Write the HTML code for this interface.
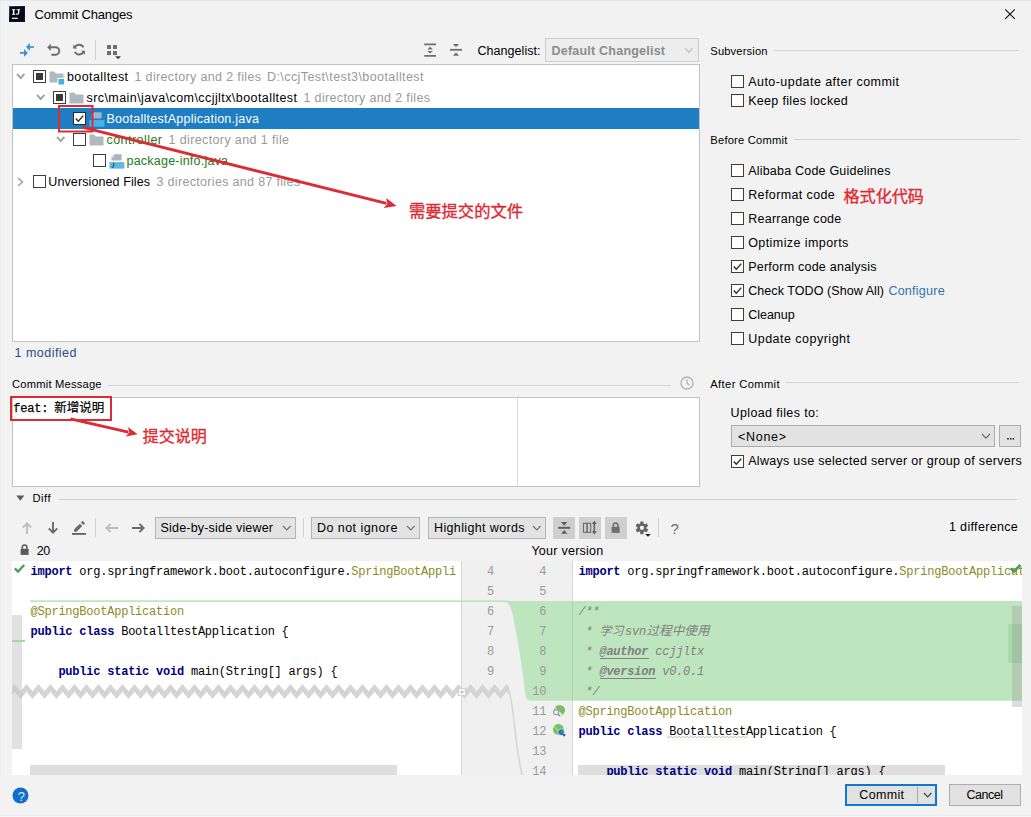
<!DOCTYPE html>
<html><head><meta charset="utf-8"><title>Commit Changes</title>
<style>
html,body{margin:0;padding:0;}
body{width:1031px;height:817px;position:relative;overflow:hidden;background:#f2f2f2;font-family:"Liberation Sans",sans-serif;}
body>div,body>svg,body>span{position:absolute;box-sizing:border-box;}
.t{white-space:pre;line-height:1;display:block;}
.m{font-family:"Liberation Mono",monospace;}
svg{overflow:visible;}
</style></head><body>
<div style="left:0px;top:0px;width:1031px;height:817px;background:#f2f2f2;"></div>
<div style="left:0px;top:0px;width:1031px;height:1px;background:#e6e6e6;"></div>
<div style="left:0px;top:1px;width:1px;height:816px;background:#ececec;"></div>
<svg style="left:9px;top:6px;" width="16" height="16" viewBox="0 0 16 16"><defs><linearGradient id="ijg" x1="0" y1="0" x2="1" y2="1"><stop offset="0" stop-color="#1b5c93"/><stop offset="0.5" stop-color="#0b1330"/><stop offset="1" stop-color="#1a0b3c"/></linearGradient></defs><rect width="16" height="16" fill="url(#ijg)"/><rect x="1" y="1" width="14" height="14" fill="#070711"/><path d="M3 3.2 H6.3 V4.3 H5.35 V7.7 H6.3 V8.8 H3 V7.7 H3.95 V4.3 H3 Z" fill="#fff"/><path d="M7.6 3.2 H11.1 V4.3 H10.3 V7 Q10.3 8.9 8.4 8.8 Q7.4 8.8 6.9 8.2 L7.5 7.3 Q7.9 7.7 8.4 7.7 Q9 7.7 9 6.9 V4.3 H7.6 Z" fill="#fff"/><rect x="3" y="11.7" width="5.8" height="1.2" fill="#fff"/></svg>
<span class="t" id="t1" style="left:34.5px;top:8px;font-size:13px;color:#000;letter-spacing:-0.188px;">Commit Changes</span>
<svg style="left:1004px;top:8px;" width="12" height="12" viewBox="0 0 12 12"><path d="M1.2 1.3 L10.8 10.9 M10.8 1.3 L1.2 10.9" stroke="#111" stroke-width="1.15" fill="none"/></svg>
<svg style="left:0px;top:0px;pointer-events:none;" width="1031" height="817" viewBox="0 0 1031 817"><path d="M33.9 47 H29.5" stroke="#3592d6" stroke-width="1.7" fill="none"/><path d="M26 47 L29.9 43.1 V50.9 Z" fill="#3592d6"/><path d="M19.9 52.9 H24.4" stroke="#3592d6" stroke-width="1.7" fill="none"/><path d="M27.9 52.9 L24 49 V56.8 Z" fill="#3592d6"/><path d="M50 47.3 H55.6 A3.7 3.7 0 0 1 55.6 54.7 H51.4" fill="none" stroke="#6e6e6e" stroke-width="2"/><path d="M47.2 47.3 L50.8 43.7 V50.9 Z" fill="#6e6e6e"/><path d="M74.4 48.2 A4.9 4.9 0 0 1 83.4 47.4 M83.8 51 A4.9 4.9 0 0 1 74.8 51.9" fill="none" stroke="#6e6e6e" stroke-width="1.9"/><path d="M73.2 44.6 V48.6 H77.2 Z M85 54.7 V50.7 H81 Z" fill="#6e6e6e"/></svg>
<div style="left:95px;top:40px;width:1px;height:20px;background:#d1d1d1;"></div>
<svg style="left:107px;top:45px;" width="16" height="16" viewBox="0 0 16 16"><rect x="0" y="0" width="4" height="4" fill="#6e6e6e"/><rect x="6" y="0" width="4" height="4" fill="#6e6e6e"/><rect x="0" y="6" width="4" height="4" fill="#6e6e6e"/><rect x="6" y="6" width="4" height="4" fill="#6e6e6e"/><path d="M8.2 11.3 H14 L11.1 14.2 Z" fill="#3c3c3c"/></svg>
<svg style="left:0px;top:0px;pointer-events:none;" width="1031" height="817" viewBox="0 0 1031 817"><path d="M424.2 44.3 H436 M424.2 55.9 H436" stroke="#6e6e6e" stroke-width="1.8"/><path d="M430.1 46.7 L432.9 49.4 H427.3 Z M430.1 53.6 L432.9 50.9 H427.3 Z" fill="#6e6e6e"/><path d="M450 49.8 H462" stroke="#6e6e6e" stroke-width="1.8"/><path d="M456 47 L459.1 44 H452.9 Z M456 52.6 L459.1 55.7 H452.9 Z" fill="#6e6e6e"/></svg>
<span class="t" id="t2" style="left:477.5px;top:45px;font-size:12.5px;color:#000;letter-spacing:0.045px;">Changelist:</span>
<div style="left:545px;top:38px;width:154px;height:24px;background:#ededed;border:1px solid #cdcdcd;"></div>
<span class="t" id="t3" style="left:551.5px;top:45px;font-size:12.5px;color:#8c8c8c;font-weight:bold;letter-spacing:0.221px;">Default Changelist</span>
<svg style="left:684.2px;top:46.699999999999996px;" width="9.6" height="6.2" viewBox="0 0 9.6 6.2"><path d="M1 1 L4.8 5.2 L8.6 1" fill="none" stroke="#b4b4b4" stroke-width="1.1"/></svg>
<div style="left:12px;top:64px;width:688px;height:278px;background:#fff;border:1px solid #c3c3c3;"></div>
<div style="left:13px;top:108px;width:686px;height:21px;background:#1e7dc3;"></div>
<svg style="left:15.8px;top:72.9px;" width="9.4" height="6.2" viewBox="0 0 9.4 6.2"><path d="M1 1 L4.7 5.2 L8.4 1" fill="none" stroke="#a0a0a0" stroke-width="1.9"/></svg>
<svg style="left:33px;top:70px;" width="13" height="13" viewBox="0 0 13 13"><rect x="0.5" y="0.5" width="12" height="12" fill="#fff" stroke="#3e3e3e" stroke-width="1"/><rect x="3" y="3" width="7" height="7" fill="#3a3a3a"/></svg>
<svg style="left:49px;top:69.5px;" width="16" height="16" viewBox="0 0 16 16"><path d="M0.5 1.5 H5.2 L6.8 3.6 H14.5 V12.5 H0.5 Z" fill="#aeb9c0"/><rect x="8" y="8" width="7.5" height="7.5" fill="#f2f2f2" opacity="0"/><rect x="9" y="8.5" width="6.5" height="6.5" fill="#40b0dd" stroke="#fff" stroke-width="1"/></svg>
<span class="t" id="t4" style="left:67px;top:71px;font-size:12.5px;color:#000;letter-spacing:0.402px;">bootalltest</span>
<span class="t" id="t5" style="left:134.5px;top:71px;font-size:12.5px;color:#999999;letter-spacing:0.349px;">1 directory and 2 files</span>
<span class="t" id="t6" style="left:267px;top:71px;font-size:12.5px;color:#999999;letter-spacing:0.418px;">D:\ccjTest\test3\bootalltest</span>
<svg style="left:36.0px;top:93.9px;" width="9.4" height="6.2" viewBox="0 0 9.4 6.2"><path d="M1 1 L4.7 5.2 L8.4 1" fill="none" stroke="#a0a0a0" stroke-width="1.9"/></svg>
<svg style="left:53px;top:91px;" width="13" height="13" viewBox="0 0 13 13"><rect x="0.5" y="0.5" width="12" height="12" fill="#fff" stroke="#3e3e3e" stroke-width="1"/><rect x="3" y="3" width="7" height="7" fill="#3a3a3a"/></svg>
<svg style="left:69px;top:90.5px;" width="16" height="16" viewBox="0 0 16 16"><path d="M0.5 1.5 H5.2 L6.8 3.6 H14.5 V12.5 H0.5 Z" fill="#aeb9c0"/></svg>
<span class="t" id="t7" style="left:86.5px;top:92px;font-size:12.5px;color:#000;letter-spacing:0.425px;">src\main\java\com\ccjjltx\bootalltest</span>
<span class="t" id="t8" style="left:303.5px;top:92px;font-size:12.5px;color:#999999;letter-spacing:0.349px;">1 directory and 2 files</span>
<svg style="left:73px;top:112px;" width="13" height="13" viewBox="0 0 13 13"><rect x="0.5" y="0.5" width="12" height="12" fill="#fff" stroke="#2b2b2b" stroke-width="1"/><path d="M2.8 6.6 L5.3 9.2 L10.3 3.6" fill="none" stroke="#2b2b2b" stroke-width="1.4"/></svg>
<svg style="left:88.5px;top:111px;" width="16" height="16" viewBox="0 0 16 16"><path d="M5.4 1.3 H12.6 V7.5 H2.5 V4.4 Z" fill="#9cb4cc"/><path d="M2.5 4.6 L5.4 1.7 V4.6 Z" fill="#c3d3e2"/><rect x="0.5" y="9.1" width="14.9" height="6.5" fill="#4fb0e6"/></svg>
<span class="t" id="t9" style="left:106.5px;top:113px;font-size:12.5px;color:#fff;letter-spacing:0.252px;">BootalltestApplication.java</span>
<svg style="left:55.8px;top:135.9px;" width="9.4" height="6.2" viewBox="0 0 9.4 6.2"><path d="M1 1 L4.7 5.2 L8.4 1" fill="none" stroke="#a0a0a0" stroke-width="1.9"/></svg>
<svg style="left:73px;top:133px;" width="13" height="13" viewBox="0 0 13 13"><rect x="0.5" y="0.5" width="12" height="12" fill="#fff" stroke="#3e3e3e" stroke-width="1"/></svg>
<svg style="left:89px;top:132.5px;" width="16" height="16" viewBox="0 0 16 16"><path d="M0.5 1.5 H5.2 L6.8 3.6 H14.5 V12.5 H0.5 Z" fill="#aeb9c0"/></svg>
<span class="t" id="t10" style="left:106.5px;top:134px;font-size:12.5px;color:#237a23;letter-spacing:0.453px;">controller</span>
<span class="t" id="t11" style="left:168.5px;top:134px;font-size:12.5px;color:#999999;letter-spacing:0.378px;">1 directory and 1 file</span>
<svg style="left:93px;top:154px;" width="13" height="13" viewBox="0 0 13 13"><rect x="0.5" y="0.5" width="12" height="12" fill="#fff" stroke="#3e3e3e" stroke-width="1"/></svg>
<svg style="left:108.5px;top:153px;" width="16" height="16" viewBox="0 0 16 16"><path d="M5.4 1.3 H12.6 V7.5 H2.5 V4.4 Z" fill="#aab4bc"/><path d="M2.5 4.6 L5.4 1.7 V4.6 Z" fill="#d3d9dd"/><rect x="0.5" y="9.1" width="14.9" height="6.5" fill="#62b5e6"/><path d="M4.7 10 V13.2 Q4.7 14.4 3.5 14.3 L2.6 14" fill="none" stroke="#23405f" stroke-width="1"/></svg>
<span class="t" id="t12" style="left:126.5px;top:155px;font-size:12.5px;color:#237a23;letter-spacing:0.220px;">package-info.java</span>
<svg style="left:16.75px;top:176.5px;" width="6.5" height="10" viewBox="0 0 6.5 10"><path d="M1 1 L5.5 5.0 L1 9" fill="none" stroke="#9b9b9b" stroke-width="1.4"/></svg>
<svg style="left:33px;top:175px;" width="13" height="13" viewBox="0 0 13 13"><rect x="0.5" y="0.5" width="12" height="12" fill="#fff" stroke="#3e3e3e" stroke-width="1"/></svg>
<span class="t" id="t13" style="left:48.3px;top:176px;font-size:12.5px;color:#000;letter-spacing:0.103px;">Unversioned Files</span>
<span class="t" id="t14" style="left:156.5px;top:176px;font-size:12.5px;color:#999999;letter-spacing:0.320px;">3 directories and 87 files</span>
<span class="t" id="t15" style="left:14.5px;top:347px;font-size:12.5px;color:#2a4a8c;letter-spacing:0.479px;">1 modified</span>
<span class="t" id="t16" style="left:710.3px;top:46px;font-size:11.2px;color:#000;letter-spacing:0.135px;">Subversion</span>
<div style="left:774px;top:49.8px;width:245px;height:1px;background:#d4d4d4;"></div>
<span class="t" id="t17" style="left:710.3px;top:135px;font-size:11.2px;color:#000;letter-spacing:0.199px;">Before Commit</span>
<div style="left:794px;top:138.8px;width:225px;height:1px;background:#d4d4d4;"></div>
<span class="t" id="t18" style="left:710.3px;top:379px;font-size:11.2px;color:#000;letter-spacing:0.365px;">After Commit</span>
<div style="left:786px;top:382.3px;width:233px;height:1px;background:#d4d4d4;"></div>
<svg style="left:731px;top:75px;" width="13" height="13" viewBox="0 0 13 13"><rect x="0.5" y="0.5" width="12" height="12" fill="#fff" stroke="#3e3e3e" stroke-width="1"/></svg>
<span class="t" id="t19" style="left:748.2px;top:76px;font-size:12.5px;color:#000;letter-spacing:0.454px;">Auto-update after commit</span>
<svg style="left:731px;top:94px;" width="13" height="13" viewBox="0 0 13 13"><rect x="0.5" y="0.5" width="12" height="12" fill="#fff" stroke="#3e3e3e" stroke-width="1"/></svg>
<span class="t" id="t20" style="left:748.2px;top:95px;font-size:12.5px;color:#000;letter-spacing:0.312px;">Keep files locked</span>
<svg style="left:731px;top:164px;" width="13" height="13" viewBox="0 0 13 13"><rect x="0.5" y="0.5" width="12" height="12" fill="#fff" stroke="#3e3e3e" stroke-width="1"/></svg>
<span class="t" id="t21" style="left:748.2px;top:165px;font-size:12.5px;color:#000;letter-spacing:0.209px;">Alibaba Code Guidelines</span>
<svg style="left:731px;top:188px;" width="13" height="13" viewBox="0 0 13 13"><rect x="0.5" y="0.5" width="12" height="12" fill="#fff" stroke="#3e3e3e" stroke-width="1"/></svg>
<span class="t" id="t22" style="left:748.2px;top:189px;font-size:12.5px;color:#000;letter-spacing:0.385px;">Reformat code</span>
<svg style="left:731px;top:212px;" width="13" height="13" viewBox="0 0 13 13"><rect x="0.5" y="0.5" width="12" height="12" fill="#fff" stroke="#3e3e3e" stroke-width="1"/></svg>
<span class="t" id="t23" style="left:748.2px;top:213px;font-size:12.5px;color:#000;letter-spacing:0.265px;">Rearrange code</span>
<svg style="left:731px;top:236px;" width="13" height="13" viewBox="0 0 13 13"><rect x="0.5" y="0.5" width="12" height="12" fill="#fff" stroke="#3e3e3e" stroke-width="1"/></svg>
<span class="t" id="t24" style="left:748.2px;top:237px;font-size:12.5px;color:#000;letter-spacing:0.421px;">Optimize imports</span>
<svg style="left:731px;top:260px;" width="13" height="13" viewBox="0 0 13 13"><rect x="0.5" y="0.5" width="12" height="12" fill="#fff" stroke="#3e3e3e" stroke-width="1"/><path d="M2.8 6.6 L5.3 9.2 L10.3 3.6" fill="none" stroke="#2b2b2b" stroke-width="1.4"/></svg>
<span class="t" id="t25" style="left:748.2px;top:261px;font-size:12.5px;color:#000;letter-spacing:0.236px;">Perform code analysis</span>
<svg style="left:731px;top:284px;" width="13" height="13" viewBox="0 0 13 13"><rect x="0.5" y="0.5" width="12" height="12" fill="#fff" stroke="#3e3e3e" stroke-width="1"/><path d="M2.8 6.6 L5.3 9.2 L10.3 3.6" fill="none" stroke="#2b2b2b" stroke-width="1.4"/></svg>
<span class="t" id="t26" style="left:748.2px;top:285px;font-size:12.5px;color:#000;letter-spacing:0.074px;">Check TODO (Show All)</span>
<span class="t" id="t27" style="left:888.4px;top:285px;font-size:12.5px;color:#2f73a8;letter-spacing:0.250px;">Configure</span>
<svg style="left:731px;top:308px;" width="13" height="13" viewBox="0 0 13 13"><rect x="0.5" y="0.5" width="12" height="12" fill="#fff" stroke="#3e3e3e" stroke-width="1"/></svg>
<span class="t" id="t28" style="left:748.2px;top:309px;font-size:12.5px;color:#000;letter-spacing:-0.013px;">Cleanup</span>
<svg style="left:731px;top:332px;" width="13" height="13" viewBox="0 0 13 13"><rect x="0.5" y="0.5" width="12" height="12" fill="#fff" stroke="#3e3e3e" stroke-width="1"/></svg>
<span class="t" id="t29" style="left:748.2px;top:333px;font-size:12.5px;color:#000;letter-spacing:0.486px;">Update copyright</span>
<span class="t" id="t30" style="left:730.5px;top:407px;font-size:12.5px;color:#000;letter-spacing:0.374px;">Upload files to:</span>
<div style="left:731px;top:425px;width:264px;height:22px;background:#e2e2e2;border:1px solid #adadad;"></div>
<span class="t" id="t31" style="left:738px;top:431px;font-size:12.5px;color:#000;letter-spacing:0.703px;">&lt;None&gt;</span>
<svg style="left:980.5px;top:433.25px;" width="10" height="6.1" viewBox="0 0 10 6.1"><path d="M1 1 L5.0 5.1 L9 1" fill="none" stroke="#666" stroke-width="1.1"/></svg>
<div style="left:999px;top:425px;width:22px;height:22px;background:#e2e2e2;border:1px solid #adadad;"></div>
<svg style="left:1006px;top:437px;" width="9" height="3" viewBox="0 0 9 3"><rect x="1.2" y="1" width="1.5" height="1.6" fill="#222"/><rect x="3.9" y="1" width="1.5" height="1.6" fill="#222"/><rect x="6.6" y="1" width="1.5" height="1.6" fill="#222"/></svg>
<svg style="left:731px;top:455px;" width="13" height="13" viewBox="0 0 13 13"><rect x="0.5" y="0.5" width="12" height="12" fill="#fff" stroke="#3e3e3e" stroke-width="1"/><path d="M2.8 6.6 L5.3 9.2 L10.3 3.6" fill="none" stroke="#2b2b2b" stroke-width="1.4"/></svg>
<span class="t" id="t32" style="left:748.2px;top:455px;font-size:12.5px;color:#000;letter-spacing:0.303px;">Always use selected server or group of servers</span>
<span class="t" id="t33" style="left:12.1px;top:379px;font-size:11.2px;color:#000;letter-spacing:0.189px;">Commit Message</span>
<div style="left:108px;top:385px;width:563px;height:1px;background:#d4d4d4;"></div>
<svg style="left:680px;top:376px;" width="14" height="14" viewBox="0 0 14 14"><circle cx="7" cy="7" r="6" fill="none" stroke="#b3b3b3" stroke-width="1.3"/><path d="M7 3.4 V7.3 L9.4 9" fill="none" stroke="#b3b3b3" stroke-width="1.3"/></svg>
<div style="left:12px;top:397px;width:688px;height:90px;background:#fff;border:1px solid #c3c3c3;"></div>
<div style="left:517px;top:398px;width:1px;height:88px;background:#dcdcdc;"></div>
<span class="t m" id="t34" style="left:13.2px;top:403px;font-size:12px;color:#000;letter-spacing:-0.2px;-webkit-text-stroke:0.25px #000;">feat:</span>
<svg style="left:16px;top:495px;" width="9" height="7" viewBox="0 0 9 7"><path d="M0.3 0.6 H8.3 L4.3 5.8 Z" fill="#5a5a5a"/></svg>
<span class="t" id="t35" style="left:32.5px;top:493px;font-size:11.2px;color:#000;letter-spacing:0.469px;">Diff</span>
<div style="left:59px;top:499px;width:958px;height:1px;background:#d0d0d0;"></div>
<svg style="left:21px;top:522px;" width="12" height="12" viewBox="0 0 12 12"><path d="M6 12 V1.5 M1.8 5.6 L6 1.4 L10.2 5.6" fill="none" stroke="#bdbdbd" stroke-width="1.9"/></svg>
<svg style="left:47px;top:522px;" width="12" height="12" viewBox="0 0 12 12"><path d="M6 0 V10.5 M1.8 6.4 L6 10.6 L10.2 6.4" fill="none" stroke="#6a6a6a" stroke-width="1.9"/></svg>
<svg style="left:0px;top:0px;pointer-events:none;" width="1031" height="817" viewBox="0 0 1031 817"><path d="M74.1 531.8 V529.3 L80 523.8 L82.3 526 L76.6 531.8 Z" fill="#6a6a6a"/><path d="M80.9 522.5 L82.5 520.8 L85.1 523.2 L83.5 524.9 Z" fill="#6a6a6a"/><rect x="72" y="533" width="14" height="1.9" fill="#666"/></svg>
<div style="left:95px;top:518px;width:1px;height:19px;background:#d1d1d1;"></div>
<svg style="left:105.2px;top:523px;" width="13" height="10" viewBox="0 0 13 10"><path d="M13 5 H1.5 M5.6 0.8 L1.4 5 L5.6 9.2" fill="none" stroke="#bdbdbd" stroke-width="1.9"/></svg>
<svg style="left:132.2px;top:523px;" width="13" height="10" viewBox="0 0 13 10"><path d="M0 5 H11.5 M7.4 0.8 L11.6 5 L7.4 9.2" fill="none" stroke="#6a6a6a" stroke-width="1.9"/></svg>
<div style="left:155px;top:517px;width:141px;height:22px;background:#e3e3e3;border:1px solid #b4b4b4;"></div>
<span class="t" id="t36" style="left:160.6px;top:522px;font-size:12.5px;color:#000;letter-spacing:0.185px;">Side-by-side viewer</span>
<svg style="left:282.0px;top:525.3px;" width="9.6" height="6" viewBox="0 0 9.6 6"><path d="M1 1 L4.8 5 L8.6 1" fill="none" stroke="#707070" stroke-width="1.1"/></svg>
<div style="left:303px;top:518px;width:1px;height:19px;background:#d1d1d1;"></div>
<div style="left:311px;top:517px;width:109px;height:22px;background:#e3e3e3;border:1px solid #b4b4b4;"></div>
<span class="t" id="t37" style="left:317px;top:522px;font-size:12.5px;color:#000;letter-spacing:0.445px;">Do not ignore</span>
<svg style="left:405.7px;top:525.3px;" width="9.6" height="6" viewBox="0 0 9.6 6"><path d="M1 1 L4.8 5 L8.6 1" fill="none" stroke="#707070" stroke-width="1.1"/></svg>
<div style="left:428px;top:517px;width:118px;height:22px;background:#e3e3e3;border:1px solid #b4b4b4;"></div>
<span class="t" id="t38" style="left:434px;top:522px;font-size:12.5px;color:#000;letter-spacing:0.367px;">Highlight words</span>
<svg style="left:532.2px;top:525.3px;" width="9.6" height="6" viewBox="0 0 9.6 6"><path d="M1 1 L4.8 5 L8.6 1" fill="none" stroke="#707070" stroke-width="1.1"/></svg>
<div style="left:553px;top:517px;width:22px;height:22px;background:#cfcfcf;"></div>
<div style="left:579px;top:517px;width:22px;height:22px;background:#cfcfcf;"></div>
<div style="left:605px;top:517px;width:22px;height:22px;background:#cfcfcf;"></div>
<svg style="left:0px;top:0px;pointer-events:none;" width="1031" height="817" viewBox="0 0 1031 817"><path d="M558.2 527.8 H570.2" stroke="#5f5f5f" stroke-width="2"/><path d="M564.2 525.7 L567.4 521.9 H561 Z M564.2 529.9 L567.4 533.7 H561 Z" fill="#5f5f5f"/><rect x="583.5" y="523.3" width="3.6" height="9" fill="none" stroke="#6a6a6a" stroke-width="1.05"/><rect x="587.1" y="523.3" width="3.6" height="9" fill="none" stroke="#6a6a6a" stroke-width="1.05"/><path d="M594.3 522.5 V533" stroke="#5f5f5f" stroke-width="1.5"/><path d="M594.3 520.7 L596.8 524.1 H591.8 Z M594.3 534.6 L596.8 531.2 H591.8 Z" fill="#5f5f5f"/></svg>
<svg style="left:611px;top:521.5px;" width="10" height="12" viewBox="0 0 10 12"><rect x="0.6" y="4.8" width="8" height="6.1" fill="#6e6e6e"/><path d="M2.3 5.2 V3.4 A2.3 2.3 0 0 1 6.9 3.4 V5.2" fill="none" stroke="#6e6e6e" stroke-width="1.5"/></svg>
<svg style="left:0px;top:0px;pointer-events:none;" width="1031" height="817" viewBox="0 0 1031 817"><path d="M641.90 521.40 L641.90 534.20 M636.36 524.60 L647.44 531.00 M647.44 524.60 L636.36 531.00 " stroke="#666" stroke-width="3.3" fill="none"/><circle cx="641.9" cy="527.8" r="4.6" fill="#666"/><circle cx="641.9" cy="527.8" r="2.1" fill="#f4f4f4"/><path d="M645.2 534 H650.8 L648 536.8 Z" fill="#1e1e1e"/></svg>
<div style="left:658px;top:518px;width:1px;height:19px;background:#d1d1d1;"></div>
<span class="t" id="t39" style="left:670.5px;top:521px;font-size:15px;color:#6a6a6a;">?</span>
<span class="t" id="t40" style="left:949px;top:521px;font-size:12.5px;color:#000;letter-spacing:0.336px;">1 difference</span>
<svg style="left:19.5px;top:543.5px;" width="10" height="12" viewBox="0 0 10 12"><rect x="0.6" y="4.8" width="8" height="6.1" fill="#5a5a5a"/><path d="M2.3 5.2 V3.4 A2.3 2.3 0 0 1 6.9 3.4 V5.2" fill="none" stroke="#5a5a5a" stroke-width="1.5"/></svg>
<span class="t" id="t41" style="left:36.7px;top:545px;font-size:12.5px;color:#000;letter-spacing:-0.406px;">20</span>
<span class="t" id="t42" style="left:531.4px;top:545px;font-size:12.5px;color:#000;letter-spacing:0.261px;">Your version</span>
<div style="left:12px;top:561px;width:1010px;height:214px;background:#fff;"></div>
<div style="left:461px;top:561px;width:112px;height:214px;background:#f0f0f0;"></div>
<div style="left:461px;top:561px;width:1px;height:214px;background:#d6d6d6;"></div>
<div style="left:572px;top:561px;width:1px;height:214px;background:#d6d6d6;"></div>
<svg style="left:0px;top:0px;pointer-events:none;" width="1031" height="817" viewBox="0 0 1031 817"><path d="M30 600.3 H507 L508 600.9 H1022 V700.8 H531 Q526.4 700.8 525.6 696 C524 682 520.5 655 516 632 C513 615 511 603.5 506 601.9 H30 Z" fill="#bee6be"/><path d="M508 688 C514 700 514 740 522 775" fill="none" stroke="#d6d6d6" stroke-width="1.6"/></svg>
<div style="left:572px;top:601px;width:1px;height:100px;background:#aed3ae;"></div>
<svg style="left:0px;top:0px;pointer-events:none;" width="1031" height="817" viewBox="0 0 1031 817"><clipPath id="zc"><rect x="12" y="680" width="497" height="24"/></clipPath><path clip-path="url(#zc)" d="M8.5 691.2 L14.5 684.0 L20.5 691.2 L26.5 684.0 L32.5 691.2 L38.5 684.0 L44.5 691.2 L50.5 684.0 L56.5 691.2 L62.5 684.0 L68.5 691.2 L74.5 684.0 L80.5 691.2 L86.5 684.0 L92.5 691.2 L98.5 684.0 L104.5 691.2 L110.5 684.0 L116.5 691.2 L122.5 684.0 L128.5 691.2 L134.5 684.0 L140.5 691.2 L146.5 684.0 L152.5 691.2 L158.5 684.0 L164.5 691.2 L170.5 684.0 L176.5 691.2 L182.5 684.0 L188.5 691.2 L194.5 684.0 L200.5 691.2 L206.5 684.0 L212.5 691.2 L218.5 684.0 L224.5 691.2 L230.5 684.0 L236.5 691.2 L242.5 684.0 L248.5 691.2 L254.5 684.0 L260.5 691.2 L266.5 684.0 L272.5 691.2 L278.5 684.0 L284.5 691.2 L290.5 684.0 L296.5 691.2 L302.5 684.0 L308.5 691.2 L314.5 684.0 L320.5 691.2 L326.5 684.0 L332.5 691.2 L338.5 684.0 L344.5 691.2 L350.5 684.0 L356.5 691.2 L362.5 684.0 L368.5 691.2 L374.5 684.0 L380.5 691.2 L386.5 684.0 L392.5 691.2 L398.5 684.0 L404.5 691.2 L410.5 684.0 L416.5 691.2 L422.5 684.0 L428.5 691.2 L434.5 684.0 L440.5 691.2 L446.5 684.0 L452.5 691.2 L458.5 684.0 L464.5 691.2 L470.5 684.0 L476.5 691.2 L482.5 684.0 L488.5 691.2 L494.5 684.0 L500.5 691.2 L506.5 684.0 L512.5 691.2 L518.5 684.0 L520.5 691.2 L520.5 699.0 L518.5 691.8 L512.5 699.0 L506.5 691.8 L500.5 699.0 L494.5 691.8 L488.5 699.0 L482.5 691.8 L476.5 699.0 L470.5 691.8 L464.5 699.0 L458.5 691.8 L452.5 699.0 L446.5 691.8 L440.5 699.0 L434.5 691.8 L428.5 699.0 L422.5 691.8 L416.5 699.0 L410.5 691.8 L404.5 699.0 L398.5 691.8 L392.5 699.0 L386.5 691.8 L380.5 699.0 L374.5 691.8 L368.5 699.0 L362.5 691.8 L356.5 699.0 L350.5 691.8 L344.5 699.0 L338.5 691.8 L332.5 699.0 L326.5 691.8 L320.5 699.0 L314.5 691.8 L308.5 699.0 L302.5 691.8 L296.5 699.0 L290.5 691.8 L284.5 699.0 L278.5 691.8 L272.5 699.0 L266.5 691.8 L260.5 699.0 L254.5 691.8 L248.5 699.0 L242.5 691.8 L236.5 699.0 L230.5 691.8 L224.5 699.0 L218.5 691.8 L212.5 699.0 L206.5 691.8 L200.5 699.0 L194.5 691.8 L188.5 699.0 L182.5 691.8 L176.5 699.0 L170.5 691.8 L164.5 699.0 L158.5 691.8 L152.5 699.0 L146.5 691.8 L140.5 699.0 L134.5 691.8 L128.5 699.0 L122.5 691.8 L116.5 699.0 L110.5 691.8 L104.5 699.0 L98.5 691.8 L92.5 699.0 L86.5 691.8 L80.5 699.0 L74.5 691.8 L68.5 699.0 L62.5 691.8 L56.5 699.0 L50.5 691.8 L44.5 699.0 L38.5 691.8 L32.5 699.0 L26.5 691.8 L20.5 699.0 L14.5 691.8 L8.5 699.0 Z" fill="#d4d4d4"/></svg>
<div style="left:12px;top:615px;width:10px;height:134px;background:#c8c8c8;opacity:0.55;"></div>
<div style="left:12px;top:640px;width:13px;height:2px;background:#a5d6a7;"></div>
<div style="left:30px;top:765px;width:367px;height:10px;background:#dedede;"></div>
<div style="left:578px;top:765px;width:367px;height:10px;background:#dedede;"></div>
<div style="left:1008px;top:624px;width:14px;height:39px;background:#8fd08f;opacity:0.5;"></div>
<div style="left:1012px;top:606px;width:10px;height:101px;background:#9a9a9a;opacity:0.35;"></div>
<svg style="left:458px;top:688px;" width="8" height="8" viewBox="0 0 8 8"><rect x="0.5" y="0.5" width="7" height="7" fill="#fff" stroke="#cfcfcf"/><path d="M1.8 4 H6.2 M4 1.8 V6.2" stroke="#b8b8b8" stroke-width="0.9"/></svg>
<svg style="left:13.5px;top:563.5px;" width="11" height="9" viewBox="0 0 11 9"><path d="M0.8 4.4 L4 7.6 L10.2 1" fill="none" stroke="#4a9e58" stroke-width="2.3"/></svg>
<svg style="left:1009.5px;top:563.5px;" width="11" height="9" viewBox="0 0 11 9"><path d="M0.8 4.4 L4 7.6 L10.2 1" fill="none" stroke="#4a9e58" stroke-width="2.3"/></svg>
<span class="t m" id="t43" style="left:30.5px;top:566px;font-size:12px;color:#000080;font-weight:bold;letter-spacing:-0.2262000000000004px;">import</span>
<span class="t m" id="t44" style="left:72.35px;top:566px;font-size:12px;color:#000;letter-spacing:-0.2262000000000004px;"> org.springframework.boot.autoconfigure.</span>
<span class="t m" id="t45" style="left:351.35px;top:566px;font-size:12px;color:#8c8c26;letter-spacing:-0.2262000000000004px;">SpringBootAppli</span>
<span class="t m" id="t46" style="left:30.5px;top:606px;font-size:12px;color:#8c8c26;letter-spacing:-0.2262000000000004px;">@SpringBootApplication</span>
<span class="t m" id="t47" style="left:30.5px;top:626px;font-size:12px;color:#000080;font-weight:bold;letter-spacing:-0.2262000000000004px;">public class</span>
<span class="t m" id="t48" style="left:114.19999999999999px;top:626px;font-size:12px;color:#000;letter-spacing:-0.2262000000000004px;"> BootalltestApplication {</span>
<span class="t m" id="t49" style="left:30.5px;top:666px;font-size:12px;color:#000;letter-spacing:-0.2262000000000004px;">    </span>
<span class="t m" id="t50" style="left:58.4px;top:666px;font-size:12px;color:#000080;font-weight:bold;letter-spacing:-0.2262000000000004px;">public static void</span>
<span class="t m" id="t51" style="left:183.95px;top:666px;font-size:12px;color:#000;letter-spacing:-0.2262000000000004px;"> main(String[] args) {</span>
<span class="t m" id="t52" style="left:487.025px;top:566px;font-size:12px;color:#999;letter-spacing:-0.2262000000000004px;">4</span>
<span class="t m" id="t53" style="left:487.025px;top:586px;font-size:12px;color:#999;letter-spacing:-0.2262000000000004px;">5</span>
<span class="t m" id="t54" style="left:487.025px;top:606px;font-size:12px;color:#999;letter-spacing:-0.2262000000000004px;">6</span>
<span class="t m" id="t55" style="left:487.025px;top:626px;font-size:12px;color:#999;letter-spacing:-0.2262000000000004px;">7</span>
<span class="t m" id="t56" style="left:487.025px;top:646px;font-size:12px;color:#999;letter-spacing:-0.2262000000000004px;">8</span>
<span class="t m" id="t57" style="left:487.025px;top:666px;font-size:12px;color:#999;letter-spacing:-0.2262000000000004px;">9</span>
<span class="t m" id="t58" style="left:539.3249999999999px;top:566px;font-size:12px;color:#999;letter-spacing:-0.2262000000000004px;">4</span>
<span class="t m" id="t59" style="left:539.3249999999999px;top:586px;font-size:12px;color:#999;letter-spacing:-0.2262000000000004px;">5</span>
<span class="t m" id="t60" style="left:539.3249999999999px;top:606px;font-size:12px;color:#999;letter-spacing:-0.2262000000000004px;">6</span>
<span class="t m" id="t61" style="left:539.3249999999999px;top:626px;font-size:12px;color:#999;letter-spacing:-0.2262000000000004px;">7</span>
<span class="t m" id="t62" style="left:539.3249999999999px;top:646px;font-size:12px;color:#999;letter-spacing:-0.2262000000000004px;">8</span>
<span class="t m" id="t63" style="left:539.3249999999999px;top:666px;font-size:12px;color:#999;letter-spacing:-0.2262000000000004px;">9</span>
<span class="t m" id="t64" style="left:532.3499999999999px;top:686px;font-size:12px;color:#999;letter-spacing:-0.2262000000000004px;">10</span>
<span class="t m" id="t65" style="left:532.3499999999999px;top:706px;font-size:12px;color:#999;letter-spacing:-0.2262000000000004px;">11</span>
<span class="t m" id="t66" style="left:532.3499999999999px;top:726px;font-size:12px;color:#999;letter-spacing:-0.2262000000000004px;">12</span>
<span class="t m" id="t67" style="left:532.3499999999999px;top:746px;font-size:12px;color:#999;letter-spacing:-0.2262000000000004px;">13</span>
<span class="t m" id="t68" style="left:532.3499999999999px;top:766px;font-size:12px;color:#999;letter-spacing:-0.2262000000000004px;">14</span>
<span class="t m" id="t69" style="left:578.5px;top:566px;font-size:12px;color:#000080;font-weight:bold;letter-spacing:-0.2262000000000004px;">import</span>
<span class="t m" id="t70" style="left:620.35px;top:566px;font-size:12px;color:#000;letter-spacing:-0.2262000000000004px;"> org.springframework.boot.autoconfigure.</span>
<span class="t m" id="t71" style="left:899.35px;top:566px;font-size:12px;color:#8c8c26;letter-spacing:-0.2262000000000004px;">SpringBootApplicat</span>
<span class="t m" id="t72" style="left:578.5px;top:606px;font-size:12px;color:#808080;font-style:italic;letter-spacing:-0.2262000000000004px;">/**</span>
<span class="t m" id="t73" style="left:578.5px;top:626px;font-size:12px;color:#808080;font-style:italic;letter-spacing:-0.2262000000000004px;"> * </span>
<span class="t m" id="t74" style="left:578.5px;top:646px;font-size:12px;color:#808080;font-style:italic;letter-spacing:-0.2262000000000004px;"> * </span>
<span class="t m" id="t75" style="left:599.425px;top:646px;font-size:12px;color:#808080;font-weight:bold;font-style:italic;letter-spacing:-0.2262000000000004px;">@author</span>
<span class="t m" id="t76" style="left:648.25px;top:646px;font-size:12px;color:#808080;font-style:italic;letter-spacing:-0.2262000000000004px;"> ccjjltx</span>
<span class="t m" id="t77" style="left:578.5px;top:666px;font-size:12px;color:#808080;font-style:italic;letter-spacing:-0.2262000000000004px;"> * </span>
<span class="t m" id="t78" style="left:599.425px;top:666px;font-size:12px;color:#808080;font-weight:bold;font-style:italic;letter-spacing:-0.2262000000000004px;">@version</span>
<span class="t m" id="t79" style="left:655.2249999999999px;top:666px;font-size:12px;color:#808080;font-style:italic;letter-spacing:-0.2262000000000004px;"> v0.0.1</span>
<span class="t m" id="t80" style="left:578.5px;top:686px;font-size:12px;color:#808080;font-style:italic;letter-spacing:-0.2262000000000004px;"> */</span>
<div style="left:599.5px;top:657.5px;width:49px;height:1px;background:#808080;"></div>
<div style="left:599.5px;top:677.5px;width:56px;height:1px;background:#808080;"></div>
<span class="t m" id="t81" style="left:578.5px;top:706px;font-size:12px;color:#8c8c26;letter-spacing:-0.2262000000000004px;">@SpringBootApplication</span>
<span class="t m" id="t82" style="left:578.5px;top:726px;font-size:12px;color:#000080;font-weight:bold;letter-spacing:-0.2262000000000004px;">public class</span>
<span class="t m" id="t83" style="left:662.2px;top:726px;font-size:12px;color:#000;letter-spacing:-0.2262000000000004px;"> BootalltestApplication {</span>
<span class="t m" id="t84" style="left:578.5px;top:766px;font-size:12px;color:#000;letter-spacing:-0.2262000000000004px;">    </span>
<span class="t m" id="t85" style="left:606.4px;top:766px;font-size:12px;color:#000080;font-weight:bold;letter-spacing:-0.2262000000000004px;">public static void</span>
<span class="t m" id="t86" style="left:731.9499999999999px;top:766px;font-size:12px;color:#000;letter-spacing:-0.2262000000000004px;"> main(String[] args) {</span>
<svg style="left:0px;top:0px;pointer-events:none;" width="1031" height="817" viewBox="0 0 1031 817"><text x="599.5" y="635" font-size="12" font-style="italic" fill="#808080" style="font-family:'Liberation Mono','Noto Sans CJK SC',monospace;">学习</text><text x="646.5" y="635" font-size="12.6" font-style="italic" fill="#808080" style="font-family:'Liberation Mono','Noto Sans CJK SC',monospace;">过程中使用</text></svg>
<span class="t m" id="t87" style="left:625.0px;top:626px;font-size:12px;color:#808080;font-style:italic;letter-spacing:-0.2262000000000004px;">svn</span>
<svg style="left:0px;top:0px;pointer-events:none;" width="1031" height="817" viewBox="0 0 1031 817"><circle cx="559.7" cy="710.3" r="5.4" fill="#7dbd5f"/><path d="M554.6 707.3 L562.6 715" stroke="#d7f0c8" stroke-width="0.9" fill="none"/><path d="M553.6 712.8 L557 709.3 L562 714.4 L558.4 717.2 Z" fill="#f0f0f0"/><circle cx="556.2" cy="712.2" r="2.5" fill="#eef1f6" stroke="#8a92aa" stroke-width="1.1"/><path d="M558 714.1 L560 716.3" stroke="#8a92aa" stroke-width="1.3" fill="none"/><circle cx="558.4" cy="729.4" r="5.4" fill="#7dbd5f"/><path d="M553.6 726 L560 732.4" stroke="#d7f0c8" stroke-width="0.9" fill="none"/><circle cx="561.2" cy="732.1" r="3.6" fill="#a4e3dc"/><circle cx="561.2" cy="732.1" r="2.9" fill="#3f8fd0"/><path d="M562.5 731 A1.7 1.7 0 1 0 562.5 733.3" fill="none" stroke="#1f4f8a" stroke-width="1"/><path d="M562.2 734.2 H566 L564.1 736.8 Z" fill="#3a4046"/></svg>
<svg style="left:0px;top:0px;pointer-events:none;" width="1031" height="817" viewBox="0 0 1031 817"><path d="M667.0 736.4 L669.0 737.7 L671.0 736.4 L673.0 737.7 L675.0 736.4 L677.0 737.7 L679.0 736.4 L681.0 737.7 L683.0 736.4 L685.0 737.7 L687.0 736.4 L689.0 737.7 L691.0 736.4 L693.0 737.7 L695.0 736.4 L697.0 737.7 L699.0 736.4 L701.0 737.7 L703.0 736.4 L705.0 737.7 L707.0 736.4 L709.0 737.7 L711.0 736.4 L713.0 737.7 L715.0 736.4 L717.0 737.7 L719.0 736.4 L721.0 737.7 L723.0 736.4 L725.0 737.7 L727.0 736.4 L729.0 737.7 L731.0 736.4 L733.0 737.7 L735.0 736.4 L737.0 737.7 L739.0 736.4 L741.0 737.7 L743.0 736.4 L745.0 737.7 L747.0 736.4" fill="none" stroke="#a9b99a" stroke-width="0.8"/></svg>
<div style="left:1022px;top:561px;width:9px;height:214px;background:#f2f2f2;"></div>
<svg style="left:1009.5px;top:563.5px;" width="11" height="9" viewBox="0 0 11 9"><path d="M0.8 4.4 L4 7.6 L10.2 1" fill="none" stroke="#4a9e58" stroke-width="2.3"/></svg>
<div style="left:0px;top:775px;width:1031px;height:42px;background:#f2f2f2;"></div>
<svg style="left:12.1px;top:787.1px;" width="17" height="17" viewBox="0 0 17 17"><circle cx="8.5" cy="8.5" r="8" fill="#0f6fc9"/></svg>
<span class="t" id="t88" style="left:17.8px;top:790px;font-size:13px;color:#dcefff;">?</span>
<div style="left:845px;top:784px;width:92px;height:22px;background:#e1e1e1;border:2px solid #0f78d4;"></div>
<div style="left:917px;top:787px;width:1px;height:16px;background:#a8a8a8;"></div>
<span class="t" id="t89" style="left:859.3px;top:789px;font-size:12.5px;color:#000;letter-spacing:0.328px;">Commit</span>
<svg style="left:922.5px;top:792.1px;" width="9.4" height="5.8" viewBox="0 0 9.4 5.8"><path d="M1 1 L4.7 4.8 L8.4 1" fill="none" stroke="#444" stroke-width="1.2"/></svg>
<div style="left:949px;top:784px;width:72px;height:22px;background:#e1e1e1;border:1px solid #adadad;"></div>
<span class="t" id="t90" style="left:966.5px;top:789px;font-size:12.5px;color:#000;letter-spacing:-0.484px;">Cancel</span>
<div style="left:0px;top:815px;width:1031px;height:1px;background:#eaeaea;"></div>
<div style="left:0px;top:816px;width:1031px;height:1px;background:#f6f6f6;"></div>
<svg style="left:0px;top:0px;pointer-events:none;" width="1031" height="817" viewBox="0 0 1031 817"><rect x="59" y="106" width="33.5" height="25.5" fill="none" stroke="#dc2b34" stroke-width="2"/><path d="M83 127.4 L386.4 203.4" stroke="#dc2b34" stroke-width="2.9" fill="none"/><path d="M396.6 206 L383.7 208.1 L387.4 203.7 L386.2 198.0 Z" fill="#dc2b34"/><rect x="11" y="397" width="100" height="23" fill="none" stroke="#dc2b34" stroke-width="2"/><path d="M70.5 418.8 L128.3 432.1" stroke="#dc2b34" stroke-width="2.9" fill="none"/><path d="M137.6 434.2 L125.8 436.6 L129.3 432.3 L128.0 426.9 Z" fill="#dc2b34"/><text x="409" y="216.5" font-size="16.3" fill="#dc2b34" stroke="#dc2b34" stroke-width="0.35" style="font-family:'Liberation Sans','Noto Sans CJK SC',sans-serif;">需要提交的文件</text><text x="843.5" y="201.5" font-size="16.1" fill="#dc2b34" stroke="#dc2b34" stroke-width="0.35" style="font-family:'Liberation Sans','Noto Sans CJK SC',sans-serif;">格式化代码</text><text x="142.7" y="442" font-size="16" fill="#dc2b34" stroke="#dc2b34" stroke-width="0.35" style="font-family:'Liberation Sans','Noto Sans CJK SC',sans-serif;">提交说明</text><text x="54.2" y="412.2" font-size="12.5" fill="#000" stroke="#000" stroke-width="0.2" style="font-family:'Liberation Mono','Noto Sans CJK SC',monospace;">新增说明</text></svg>
</body></html>
